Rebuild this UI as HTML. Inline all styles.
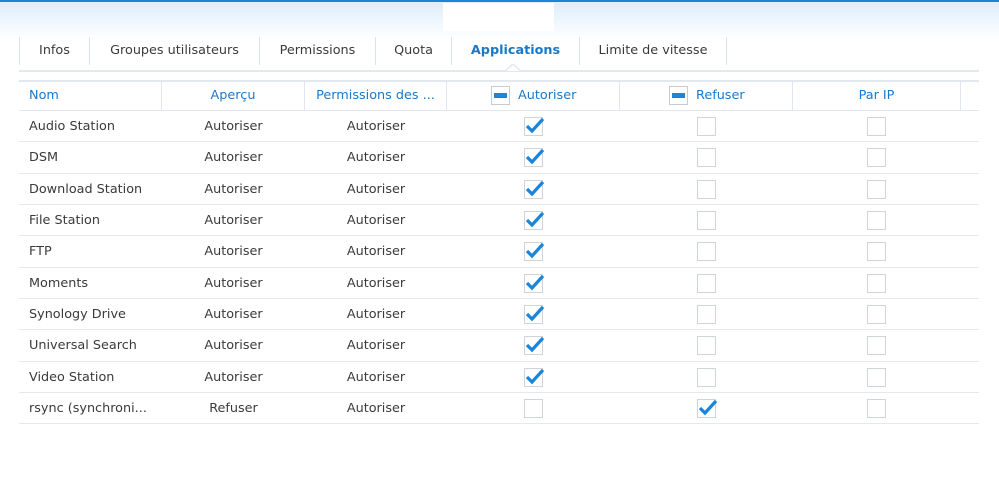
<!DOCTYPE html>
<html><head><meta charset="utf-8"><style>
*{margin:0;padding:0;box-sizing:border-box}
body{width:999px;height:480px;background:#fff;position:relative;overflow:hidden;font-family:"DejaVu Sans","Liberation Sans",sans-serif;font-size:12.8px;color:#3a3a3a}
.top{position:absolute;left:0;top:0;width:999px;height:40px;background:linear-gradient(#dcecfa,#fff)}
.bl{position:absolute;left:0;top:0;width:999px;height:2px;background:#1a86d9}
.wr{position:absolute;left:443px;top:3px;width:111px;height:28px;background:#fff}
.tab{position:absolute;top:37px;height:28px;line-height:28px;text-align:center;border-left:1px solid #dde3ea}
.tabline{position:absolute;left:19px;top:70px;width:960px;height:2px;background:#e3e8ee}
.hd{position:absolute;top:80px;left:19px;width:960px;height:31px;border-top:2px solid #e3e8ee;border-bottom:1px solid #e0e6ec}
.hc{position:absolute;top:81px;height:29px;line-height:29px;color:#1a78c8;text-align:center;border-right:1px solid #e0e6ec}
.ht{position:absolute;top:81px;line-height:29px;color:#1a78c8}
.row{position:absolute;left:19px;width:960px;height:31.33px;border-bottom:1px solid #e6e9ec}
.c{position:absolute;line-height:31px}
.cb{position:absolute;width:19px;height:19px;border:1px solid #cfd4d9;background:#fff}
.mn{position:absolute;width:19px;height:19px;border:1px solid #c6ccd2;background:#fff}
.mn:after{content:"";position:absolute;left:2px;top:6px;width:13px;height:5px;background:#1a86d9}
</style></head><body>
<div class="top"></div><div class="bl"></div><div class="wr"></div>
<div class="tab" style="left:19px;width:70px">Infos</div>
<div class="tab" style="left:89px;width:170px">Groupes utilisateurs</div>
<div class="tab" style="left:259px;width:116px">Permissions</div>
<div class="tab" style="left:375px;width:76px">Quota</div>
<div class="tab" style="left:451px;width:128px;color:#1a78c8;font-weight:bold">Applications</div>
<div class="tab" style="left:579px;width:148px;border-right:1px solid #dde3ea">Limite de vitesse</div>
<div class="tabline"></div>
<svg style="position:absolute;left:505px;top:64px" width="16" height="8"><path d="M0 7 L8 0 L16 7" fill="#fff" stroke="#e3e8ee" stroke-width="1.5"/></svg>
<div class="hd"></div>
<div class="hc" style="left:19px;width:143px;text-align:left;padding-left:10px">Nom</div>
<div class="hc" style="left:162px;width:143px">Aperçu</div>
<div class="hc" style="left:305px;width:142px">Permissions des ...</div>
<div class="hc" style="left:447px;width:173px"></div>
<div class="hc" style="left:620px;width:173px"></div>
<div class="hc" style="left:793px;width:168px">Par IP</div>
<div class="ht" style="left:518px">Autoriser</div>
<div class="ht" style="left:696px">Refuser</div>
<div class="mn" style="left:491px;top:86px"></div>
<div class="mn" style="left:669px;top:86px"></div>
<div id="rows"></div>
<script>
var n=["Audio Station","DSM","Download Station","File Station","FTP","Moments","Synology Drive","Universal Search","Video Station","rsync (synchroni..."];
var h="";
var ck='<svg style="position:absolute;left:-1px;top:-3px" width="22" height="20"><path d="M3 11 L8 16 L19 4" fill="none" stroke="#1a86d9" stroke-width="3.2"/></svg>';
for(var i=0;i<10;i++){var t=111+i*31.33;var r=i==9;
h+='<div class="row" style="top:'+t+'px"></div>';
h+='<div class="c" style="left:29px;top:'+t+'px">'+n[i]+'</div>';
h+='<div class="c" style="left:162px;width:143px;text-align:center;top:'+t+'px">'+(r?'Refuser':'Autoriser')+'</div>';
h+='<div class="c" style="left:305px;width:142px;text-align:center;top:'+t+'px">Autoriser</div>';
var y=t+6;
h+='<div class="cb" style="left:524px;top:'+y+'px">'+(r?'':ck)+'</div>';
h+='<div class="cb" style="left:697px;top:'+y+'px">'+(r?ck:'')+'</div>';
h+='<div class="cb" style="left:867px;top:'+y+'px"></div>';}
document.getElementById("rows").innerHTML=h;
</script>
</body></html>
